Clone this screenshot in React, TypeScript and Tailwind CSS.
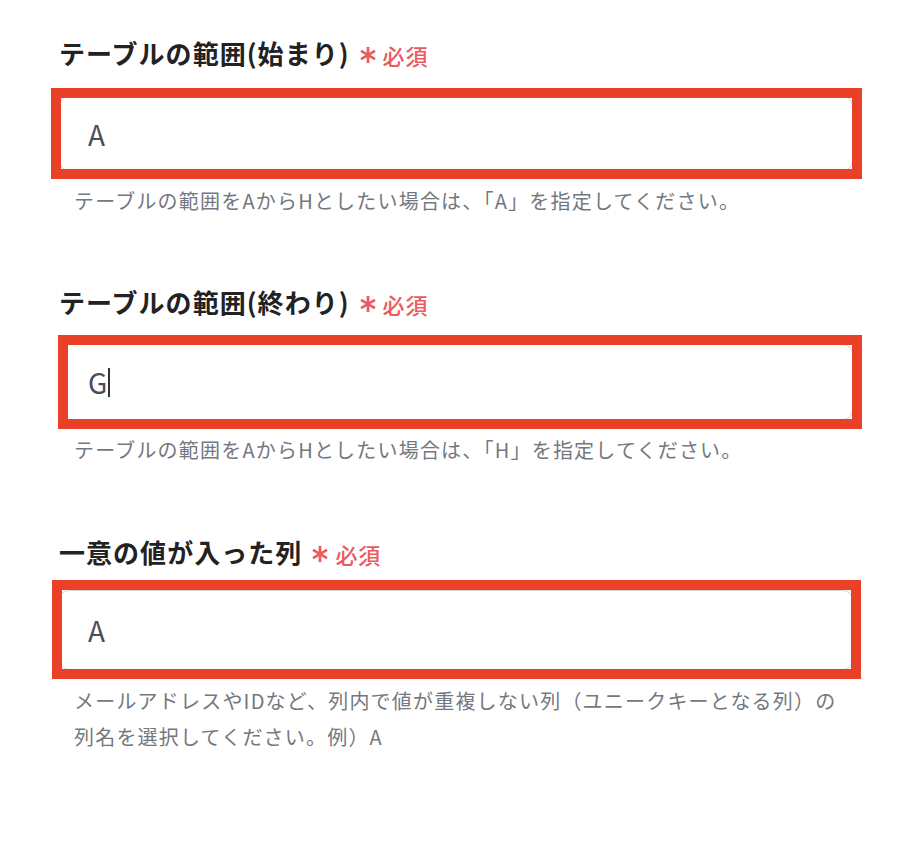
const jp = '"Noto Sans CJK JP", "Noto Sans", sans-serif';

function Asterisk() {
  return (
    <svg viewBox="0 0 20 20" className="size-[18px]" aria-hidden="true">
      <g stroke="#ea5a5f" strokeWidth="3" strokeLinecap="butt">
        <line x1="10" y1="1" x2="10" y2="19" />
        <line x1="2.2" y1="5.5" x2="17.8" y2="14.5" />
        <line x1="2.2" y1="14.5" x2="17.8" y2="5.5" />
      </g>
    </svg>
  );
}

type Field = {
  label: string;
  value: string;
  caret?: boolean;
  help: React.ReactNode;
  wrap: string;
  inputMt: string;
  inputH: string;
  helpMt: string;
  box: string;
};

const fields: Field[] = [
  {
    label: 'テーブルの範囲(始まり)',
    value: 'A',
    help: 'テーブルの範囲をAからHとしたい場合は、「A」を指定してください。',
    wrap: '',
    inputMt: 'mt-[25px]',
    inputH: 'h-[75px]',
    helpMt: 'mt-[12px]',
    box: '-left-[8px] -top-[8px] -right-[9px] -bottom-[8px]',
  },
  {
    label: 'テーブルの範囲(終わり)',
    value: 'G',
    caret: true,
    help: 'テーブルの範囲をAからHとしたい場合は、「H」を指定してください。',
    wrap: 'mt-[65px]',
    inputMt: 'mt-[24px]',
    inputH: 'h-[76px]',
    helpMt: 'mt-[12px]',
    box: '-left-[1px] -top-[9px] -right-[9px] -bottom-[9px]',
  },
  {
    label: '一意の値が入った列',
    value: 'A',
    help: (
      <>
        メールアドレスやIDなど、列内で値が重複しない列（ユニークキーとなる列）の
        <br />
        列名を選択してください。例）A
      </>
    ),
    wrap: 'mt-[66px]',
    inputMt: 'mt-[20px]',
    inputH: 'h-[80px]',
    helpMt: 'mt-[13px]',
    box: '-left-[7px] -top-[10px] -right-[8px] -bottom-[9px]',
  },
];

export default function App() {
  return (
    <div className="min-h-[845px] w-[915px] bg-white" style={{ fontFamily: jp }}>
      <div className="w-[794px] pl-0 pt-[35px] ml-[59px]">
        {fields.map((f) => (
          <div key={f.label} className={f.wrap}>
            <div className="flex h-[36px] items-center">
              <span className="text-[26px] font-bold leading-[36px] tracking-[0.04em] text-[#222222]">
                {f.label}
              </span>
              <span className="ml-[9px] mt-[3px] flex items-center gap-[6px]">
                <Asterisk />
                <span className="text-[22px] font-medium leading-none tracking-[0.04em] text-[#ea5a5f]">
                  必須
                </span>
              </span>
            </div>
            <div className={`relative ${f.inputMt} ${f.inputH}`}>
              <div className="flex h-full items-center rounded-[10px] border border-[#cfd3d8] bg-white pl-[28px]">
                <span className="text-[28px] leading-none text-[#4a4f57]">{f.value}</span>
                {f.caret && <span className="ml-[1px] h-[29px] w-[2px] bg-[#333]" />}
              </div>
              <div className={`absolute ${f.box} border-[10px] border-[#e84127]`} />
            </div>
            <p
              className={`${f.helpMt} pl-[15px] text-[20px] leading-[36px] tracking-[0.06em] text-[#737880]`}
            >
              {f.help}
            </p>
          </div>
        ))}
      </div>
    </div>
  );
}
